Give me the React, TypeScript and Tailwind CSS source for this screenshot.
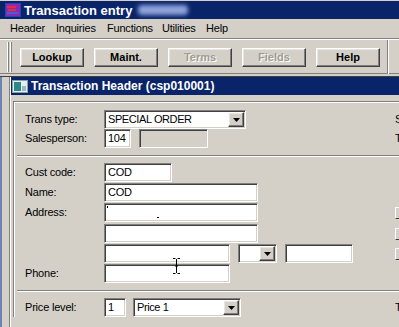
import React from "react";

const sunken =
  "h-[19px] border border-t-[#808080] border-l-[#808080] border-b-white border-r-white shadow-[inset_1px_1px_0_#404040,inset_-1px_-1px_0_#d4d0c8]";
const raised =
  "border border-t-white border-l-white border-b-[#404040] border-r-[#404040] shadow-[inset_-1px_-1px_0_#808080,inset_1px_1px_0_#e8e6e2]";

function Field({ w, value, disabled }: { w: string; value?: string; disabled?: boolean }) {
  return (
    <div className={`${sunken} ${w} ${disabled ? "bg-[#d4d0c8]" : "bg-white"} flex items-center pl-[3px] text-[11px] tracking-[-0.3px] leading-none`}>
      {value}
    </div>
  );
}

function Select({ w, value }: { w: string; value?: string }) {
  return (
    <div className={`${sunken} ${w} bg-white flex items-stretch p-[1px]`}>
      <div className="flex-1 flex items-center pl-[2px] text-[11px] tracking-[-0.4px] leading-none">{value}</div>
      <div className={`${raised} w-[16px] bg-[#d4d0c8] flex items-center justify-center`}>
        <svg width="7" height="4" viewBox="0 0 7 4">
          <path d="M0 0h7L3.5 4z" fill="#000" />
        </svg>
      </div>
    </div>
  );
}

function Sep() {
  return <div className="h-[2px] border-t border-t-[#808080] border-b border-b-white" />;
}

function Row({
  label,
  children,
  right,
  className = "",
}: {
  label?: string;
  children: React.ReactNode;
  right?: React.ReactNode;
  className?: string;
}) {
  return (
    <div className={`grid grid-cols-[79px_291px_40px] items-center h-[19px] ${className}`}>
      <div className="text-[11px] tracking-[-0.2px] leading-none whitespace-nowrap">{label}</div>
      <div className="flex items-center">{children}</div>
      <div className="text-[11px] leading-none whitespace-nowrap flex items-center">{right}</div>
    </div>
  );
}

function SmallBtn() {
  return <div className="w-[12px] h-[12px] bg-[#d4d0c8] border border-t-white border-l-white border-b-[#404040] border-r-[#404040]" />;
}

function ToolBtn({ label, disabled }: { label: string; disabled?: boolean }) {
  return (
    <div
      className={`${raised} w-[64px] h-[19px] bg-[#d4d0c8] flex items-center justify-center font-bold text-[11px] leading-none ${
        disabled ? "text-[#a09c94] [text-shadow:1px_1px_0_#fff]" : "text-black"
      }`}
    >
      {label}
    </div>
  );
}

export default function App() {
  return (
    <div className="w-[399px] h-[327px] overflow-hidden bg-[#d4d0c8] relative font-['Liberation_Sans',Arial,sans-serif] text-black select-none">
      {/* Main title bar */}
      <div className="h-[19px] border-t border-t-[#d4d0c8] bg-[#0a246a] flex items-center pl-[5px]">
        <svg width="16" height="14" viewBox="0 0 16 14" className="mr-[3px] shrink-0">
          <rect x="0" y="0" width="16" height="14" fill="#2a3fbf" />
          <rect x="1" y="1" width="14" height="12" fill="#8a2ab0" />
          <rect x="2" y="3" width="9" height="2" fill="#e03040" />
          <rect x="3" y="6" width="8" height="2" fill="#e03040" />
          <rect x="2" y="9" width="11" height="2" fill="#4060e0" />
        </svg>
        <span className="text-white font-bold text-[13px] leading-none">Transaction entry</span>
        <div className="ml-[6px] w-[50px] h-[10px] bg-[#8ea3dc] blur-[2px] rounded-sm" />
      </div>

      {/* Menu bar */}
      <div className="h-[19px] flex items-center pl-[10px] text-[11px] tracking-[-0.2px] leading-none">
        <span className="w-[46px]">Header</span>
        <span className="w-[51px]">Inquiries</span>
        <span className="w-[55px]">Functions</span>
        <span className="w-[44px]">Utilities</span>
        <span>Help</span>
      </div>
      <Sep />

      {/* Toolbar */}
      <div className="h-[34px] flex items-center relative border-b border-b-[#808080]">
        <div className="ml-[7px] h-[30px] flex gap-[1px] shrink-0">
          <div className="w-[2px] border-l border-l-white border-r border-r-[#808080]" />
          <div className="w-[2px] border-l border-l-white border-r border-r-[#808080]" />
        </div>
        <div className="ml-[8px] flex gap-[10px] mt-[2px] shrink-0">
          <ToolBtn label="Lookup" />
          <ToolBtn label="Maint." />
          <ToolBtn label="Terms" disabled />
          <ToolBtn label="Fields" disabled />
          <ToolBtn label="Help" />
        </div>
        <div className="ml-[7px] h-[34px] w-[2px] shrink-0 border-l border-l-[#808080] border-r border-r-white" />
      </div>
      <div className="h-[3px] bg-[#d4d0c8] border-b border-b-[#404040]" />

      {/* MDI area */}
      <div className="flex h-[250px]">
        <div className="w-[10px] shrink-0 border-l-2 border-l-[#6f82b4] border-r border-r-[#808080]" />
        <div className="w-[420px] shrink-0 border-l border-l-white">
          {/* child title */}
          <div className="h-[18px] bg-[#0a246a] flex items-center pl-[1px]">
            <svg width="16" height="13" viewBox="0 0 16 13" className="mr-[3px] shrink-0">
              <rect x="0" y="0" width="16" height="13" fill="#e8ecef" />
              <rect x="0.5" y="0.5" width="15" height="12" fill="none" stroke="#8aa0a8" />
              <rect x="2" y="2" width="7" height="9" fill="#2a8a88" />
              <rect x="10" y="6" width="4" height="5" fill="#9ab8c0" />
            </svg>
            <span className="text-white font-bold text-[12px] leading-none">Transaction Header (csp010001)</span>
          </div>
          {/* body */}
          <div className="pt-[6px] pl-[2px]">
            <div className="border-t border-t-[#808080] border-l border-l-[#808080]">
              <div className="border-t border-t-white border-l border-l-white pt-[7px] pl-[10px]">
                <Row label="Trans type:" right={<span>Status:</span>}>
                  <Select w="w-[142px]" value="SPECIAL ORDER" />
                </Row>
                <Row label="Salesperson:" right={<span>Terms:</span>}>
                  <Field w="w-[27px]" value="104" />
                  <div className="ml-[8px]">
                    <Field w="w-[69px]" disabled />
                  </div>
                </Row>
                <div className="mt-[7px] -ml-[8px]">
                  <Sep />
                </div>
                <Row label="Cust code:" className="mt-[6px]">
                  <Field w="w-[68px]" value="COD" />
                </Row>
                <Row label="Name:" className="mt-[1px]">
                  <Field w="w-[154px]" value="COD" />
                </Row>
                <Row label="Address:" className="mt-[1px]" right={<SmallBtn />}>
                  <div className={`${sunken} w-[154px] bg-white relative`}>
                    <div className="absolute left-[2px] top-[2px] w-[1px] h-[2px] bg-black" />
                    <div className="absolute left-[52px] top-[13px] w-[2px] h-[1px] bg-black" />
                  </div>
                </Row>
                <Row className="mt-[2px]" right={<SmallBtn />}>
                  <Field w="w-[154px]" />
                </Row>
                <Row className="mt-[1px]" right={<SmallBtn />}>
                  <Field w="w-[126px]" />
                  <div className="ml-[8px]">
                    <Select w="w-[39px]" />
                  </div>
                  <div className="ml-[8px]">
                    <Field w="w-[68px]" />
                  </div>
                </Row>
                <Row label="Phone:" className="mt-[1px]">
                  <Field w="w-[126px]" />
                </Row>
                <div className="mt-[7px] -ml-[8px]">
                  <Sep />
                </div>
                <Row label="Price level:" className="mt-[6px]" right={<span>Tax:</span>}>
                  <Field w="w-[22px]" value="1" />
                  <div className="ml-[7px]">
                    <Select w="w-[108px]" value="Price 1" />
                  </div>
                </Row>
              </div>
            </div>
          </div>
        </div>
      </div>

      {/* I-beam cursor */}
      <svg className="absolute left-[172px] top-[258px]" width="9" height="16" viewBox="0 0 9 16">
        <path d="M1 0.5h2.5M5.5 0.5H8M4.5 1v14M1 15.5h2.5M5.5 15.5H8M3 8h3" stroke="#000" strokeWidth="1" fill="none" />
      </svg>
    </div>
  );
}
